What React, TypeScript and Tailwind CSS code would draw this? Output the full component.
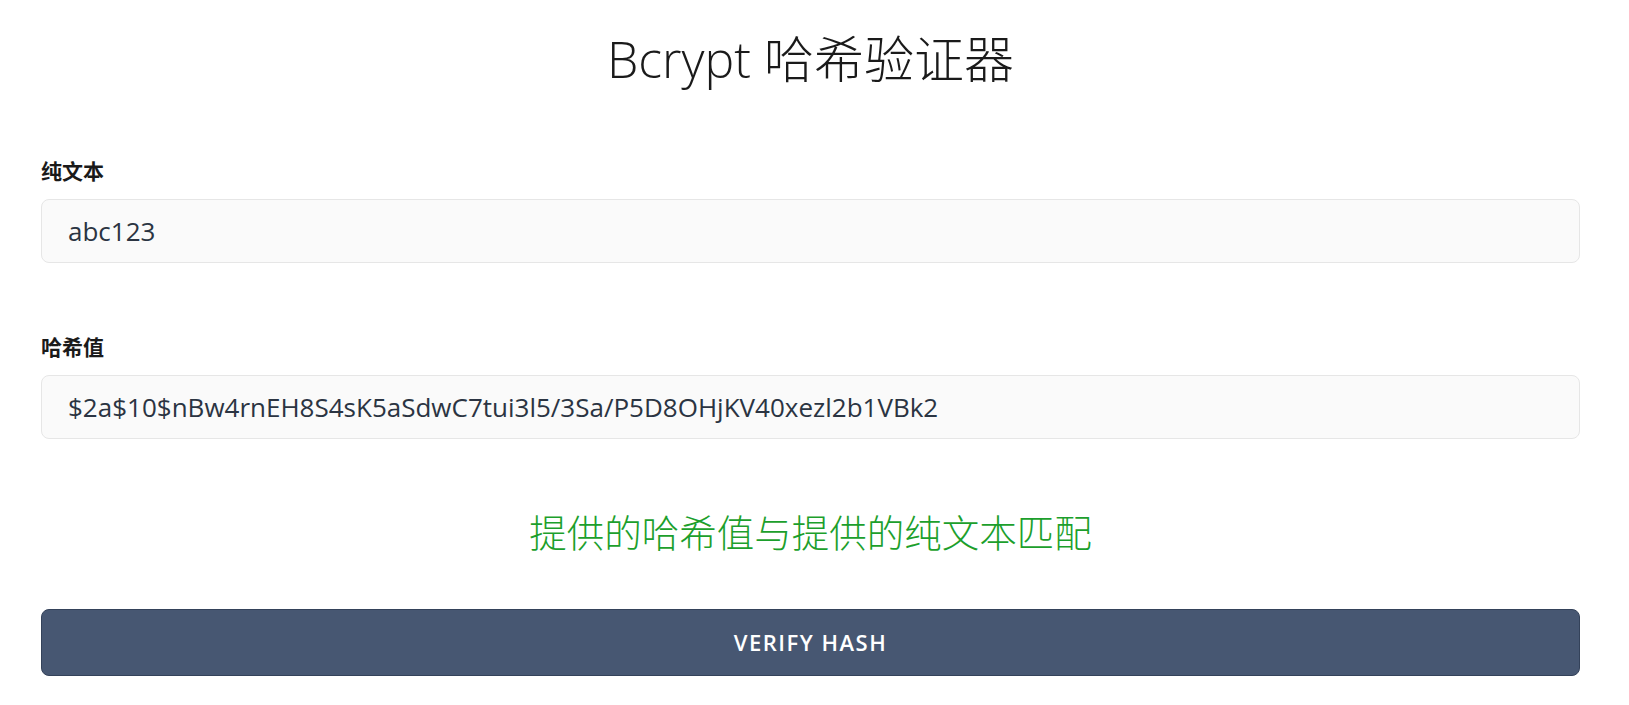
import React from 'react'

const font = "font-['Open_Sans','Noto_Sans_CJK_SC',sans-serif]"

const Field: React.FC<{ label: string; value: string }> = ({ label, value }) => (
  <div className="flex flex-col">
    <label className="text-[21px] font-bold leading-[24px] text-[#1a1a1a]">{label}</label>
    <div className="mt-[16px] flex h-[64px] items-center rounded-lg border border-[#e6e6e6] bg-[#fafafa] px-[26px]">
      <span className="text-[26px] text-[#2b3442]">{value}</span>
    </div>
  </div>
)

const App: React.FC = () => {
  return (
    <div className={`${font} min-h-[705px] bg-white pl-[41px] pr-[49px] pt-[30px] pb-[28px]`}>
      <h1 className="text-center text-[50px] font-light leading-[58px] text-[#1a1a1a]">Bcrypt 哈希验证器</h1>

      <div className="mt-[71px]">
        <Field label="纯文本" value="abc123" />
      </div>

      <div className="mt-[72px]">
        <Field label="哈希值" value="$2a$10$nBw4rnEH8S4sK5aSdwC7tui3l5/3Sa/P5D8OHjKV40xezl2b1VBk2" />
      </div>

      <p className="mt-[71px] text-center text-[37.5px] font-light leading-[46px] text-[#1c9f2c]">
        提供的哈希值与提供的纯文本匹配
      </p>

      <button className="mt-[53px] flex h-[67px] w-full items-center justify-center rounded-lg border border-[#34425a] bg-[#475772] text-[22px] font-semibold tracking-[1.5px] text-white">
        VERIFY HASH
      </button>
    </div>
  )
}

export default App
